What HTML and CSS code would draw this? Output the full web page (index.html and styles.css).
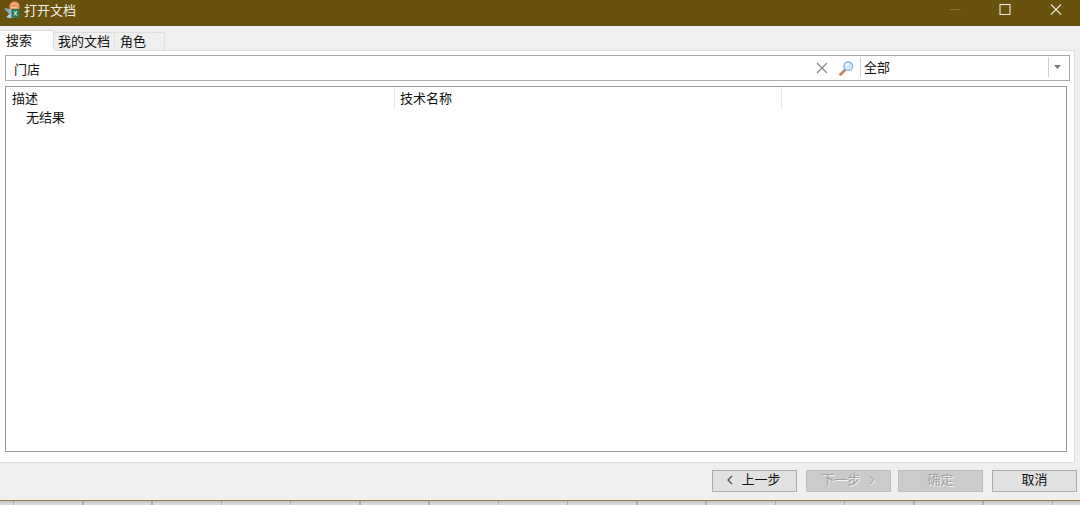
FILE: index.html
```html
<!DOCTYPE html>
<html lang="zh-CN">
<head>
  <meta charset="UTF-8" />
  <meta name="viewport" content="width=device-width, initial-scale=1.0">
  <title>打开文档</title>
  <link rel="stylesheet" href="styles.css">
</head>
<body>
  <div class="window">
    <header class="titlebar">
      <svg class="app-icon" width="18" height="18" viewBox="0 0 18 18">
        <path d="M0 7l5 1 2-2 3 4v7H3l2-4z" fill="#8eabc0" />
        <path d="M2 16l5-4v5z" fill="#b5cad6" />
        <circle cx="10.5" cy="5.5" r="5.2" fill="#e8925c" />
        <path d="M7 4q3.5-3 7 0M7 6.5h6" stroke="#f8c79d" stroke-width="1.2" fill="none" />
        <rect x="7.5" y="8" width="8" height="8.5" fill="#277a58" />
        <path d="M10 10.3l3 4.2M13 10.3l-3 4.2" stroke="#d7eee0" stroke-width="1.1" />
      </svg>
      <span class="title">打开文档</span>
      <div class="window-controls">
        <svg width="12" height="12" viewBox="0 0 12 12"><path d="M0.5 6.5h11" stroke="#80703c" /></svg>
        <svg width="12" height="12" viewBox="0 0 12 12"><rect x="1" y="1.5" width="10" height="10" fill="none" stroke="#eee9dc" stroke-width="1.1" /></svg>
        <svg width="12" height="12" viewBox="0 0 12 12"><path d="M1 1.5l10 10M11 1.5l-10 10" stroke="#e8e3d5" stroke-width="1.2" /></svg>
      </div>
    </header>

    <nav class="tabs">
      <div class="tab active">搜索</div>
      <div class="tab documents">我的文档</div>
      <div class="tab roles">角色</div>
    </nav>

    <main class="panel">
      <div class="search-box">
        <span class="search-text">门店</span>
        <svg class="clear" width="12" height="12" viewBox="0 0 12 12"><path d="M1 1l10 10M11 1L1 11" stroke="#858585" stroke-width="1.2" fill="none" /></svg>
        <svg class="search-icon" width="15" height="15" viewBox="0 0 15 15">
          <path d="M1.5 13.5l4.5-4.5" stroke="#c28256" stroke-width="2.6" stroke-linecap="round" />
          <path d="M5 10l1.5-1.5" stroke="#8090b0" stroke-width="2" />
          <circle cx="9.3" cy="5.3" r="4.3" fill="#cfeaff" stroke="#8eb2dc" stroke-width="1.3" />
          <path d="M7 5q.5-2.5 3-2.5" stroke="#fff" stroke-width="1.5" fill="none" />
        </svg>
        <div class="scope">
          <span>全部</span>
          <div class="arrow"></div>
        </div>
      </div>

      <div class="results">
        <div class="results-head">
          <div>描述</div>
          <div>技术名称</div>
        </div>
        <div class="empty">无结果</div>
      </div>
    </main>

    <footer class="buttons">
      <button class="btn">
        <svg class="chevron" width="6" height="10" viewBox="0 0 6 10"><path d="M5 .8L1 5l4 4.2" fill="none" stroke="#444" stroke-width="1.2" /></svg>
        上一步
      </button>
      <button class="btn" disabled>
        下一步
        <svg class="chevron" width="7" height="11" viewBox="0 0 7 11"><path d="M2 1.8L6 6l-4 4.2" fill="none" stroke="#f5f5f5" /><path d="M1 .8L5 5 1 9.2" fill="none" stroke="#9d9d9d" /></svg>
      </button>
      <button class="btn" disabled>确定</button>
      <button class="btn">取消</button>
    </footer>
  </div>
  <div class="sheet"></div>
</body>
</html>
```

FILE: styles.css
```css
* {
  box-sizing: border-box;
}

body {
  margin: 0;
  height: 505px;
  overflow: hidden;
  font-family: "Noto Sans CJK SC", sans-serif;
  font-size: 13px;
  line-height: 18px;
  color: #111;
  background: #dcdcdc;
}

svg {
  display: block;
  flex: none;
}

.window {
  display: flex;
  flex-direction: column;
  height: 501px;
  background: #efefef;
  border-bottom: 1px solid #93804b;
}

.titlebar {
  display: flex;
  align-items: flex-start;
  height: 26px;
  flex: none;
  padding: 1px 18px 0 4px;
  background: #69510e;
  color: #f3efe4;
}

.title {
  margin-left: 2px;
  line-height: 17px;
}

.window-controls {
  display: flex;
  gap: 39px;
  margin: 2px 0 0 auto;
}

.window-controls svg:first-child {
  margin-right: -1px;
}

.tabs {
  display: flex;
  align-items: flex-end;
  height: 24px;
  flex: none;
}

.tab {
  height: 18px;
  padding-left: 5px;
  line-height: 16px;
  border: 1px solid #dedede;
  border-left: none;
  border-bottom: none;
}

.tab.active {
  width: 54px;
  height: 20px;
  padding-left: 6px;
  line-height: 17px;
  background: #fff;
  box-shadow: 0 1px #fff;
  position: relative;
}

.tab.documents {
  width: 61px;
  padding-left: 4px;
}

.tab.roles {
  width: 50px;
}

.panel {
  width: 1075px;
  height: 413px;
  flex: none;
  padding: 4px 4px 0 5px;
  background: #fff;
  border: 1px solid #dedede;
  border-left: none;
}

.search-box {
  display: flex;
  align-items: center;
  height: 26px;
  padding-left: 8px;
  border: 1px solid #a9aab0;
}

.search-text {
  padding-top: 1px;
}

.clear {
  margin-left: auto;
}

.search-icon {
  margin: 0 6px 0 11px;
}

.scope {
  display: flex;
  align-items: center;
  justify-content: space-between;
  width: 209px;
  height: 20px;
  margin-bottom: 2px;
  padding-left: 3px;
  border-left: 1px solid #d0d0d0;
}

.arrow {
  width: 21px;
  height: 20px;
  padding: 8px 0 0 5px;
  border-left: 1px solid #d0d0d0;
}

.arrow::before {
  content: "";
  display: block;
  width: 7px;
  height: 4px;
  background: #777;
  clip-path: polygon(0 0, 100% 0, 50% 100%);
}

.results {
  width: 1062px;
  height: 366px;
  margin-top: 5px;
  border: 1px solid #9697a1;
}

.results-head {
  display: grid;
  grid-template-columns: 389px 387px;
  height: 22px;
}

.results-head div {
  padding: 1px 0 0 6px;
  line-height: 20px;
  border-right: 1px solid #e7e7e7;
}

.results-head div + div {
  padding-left: 5px;
}

.empty {
  padding-left: 20px;
  line-height: 15px;
}

.buttons {
  display: flex;
  justify-content: flex-end;
  gap: 8px;
  padding: 7px 3px 0 0;
}

.btn {
  display: flex;
  align-items: center;
  justify-content: center;
  gap: 8px;
  width: 85px;
  height: 22px;
  padding: 0 0 4px;
  font: inherit;
  line-height: 16px;
  color: #111;
  background: #e1e1e1;
  border: 1px solid #adadad;
}

.btn:first-child {
  margin-right: 1px;
  padding-right: 1px;
}

.btn:disabled {
  color: #a0a0a0;
  background: #cbcbcb;
  border-color: #bfbfbf;
  text-shadow: 1px 1px #f5f5f5;
}

.btn:nth-child(3) {
  margin-right: 1px;
}

.buttons .btn:nth-child(2) {
  margin-right: -1px;
}

.chevron {
  margin-top: 2px;
}

/* cells of the spreadsheet behind the dialog */
.sheet {
  height: 4px;
  background:
    linear-gradient(rgba(0, 0, 0, 0.1), transparent),
    repeating-linear-gradient(to right, #b4b4b4 0 1.4px, #dcdcdc 1.4px 69.25px) 13px 0;
}
```
